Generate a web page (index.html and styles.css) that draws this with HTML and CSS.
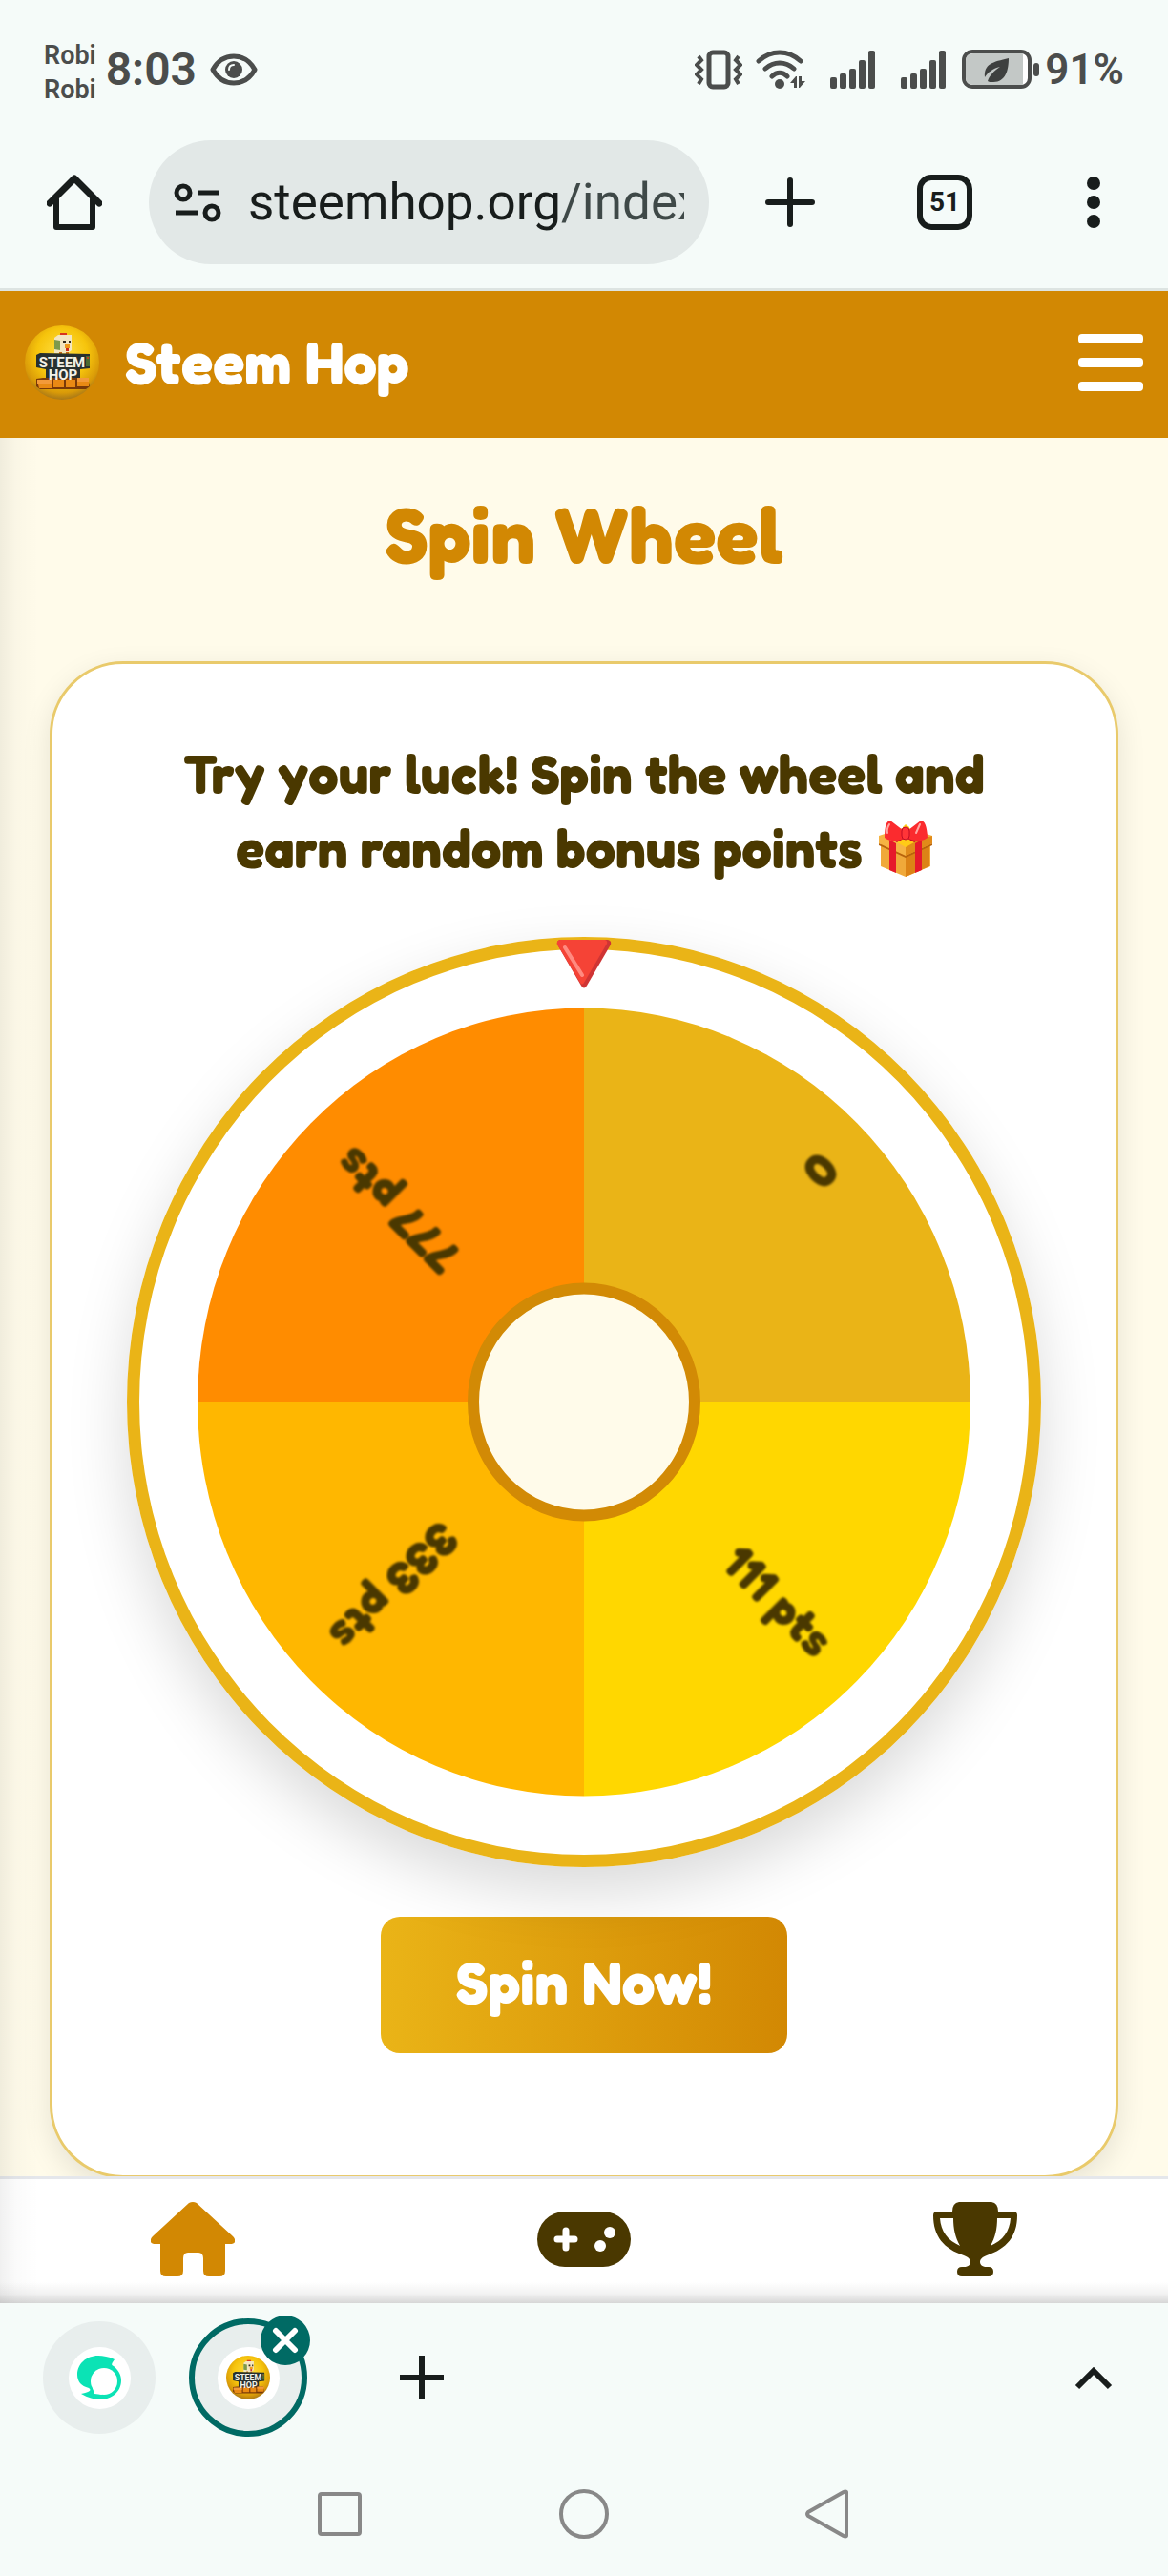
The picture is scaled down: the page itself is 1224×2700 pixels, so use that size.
FILE: index.html
```
<!DOCTYPE html>
<html lang="en">
<head>
    <meta charset="UTF-8">
    <meta name="viewport" content="width=device-width, initial-scale=1">
    <title>Steem Hop</title>
    <link rel="stylesheet" href="styles.css">
</head>
<body>
    <!-- shared logo -->
    <svg class="defs" aria-hidden="true">
        <defs>
            <radialGradient id="egg" cx="50%" cy="38%" r="62%">
                <stop offset="0" stop-color="#ffe045"/>
                <stop offset="0.55" stop-color="#f6c40c"/>
                <stop offset="0.85" stop-color="#d99a08"/>
                <stop offset="1" stop-color="#a87818"/>
            </radialGradient>
            <symbol id="logo" viewBox="0 0 78 78">
                <circle cx="39" cy="39" r="39" fill="url(#egg)"/>
                <path d="M37 12V8h7v4z" fill="#d8341c"/>
                <path d="M31 13l4-3h14v16l-4 3H31z" fill="#f3e6c0"/>
                <path d="M31 15l6 1v10l-6-1z" fill="#7d9a4c"/>
                <path d="M40 16h3v3h-3zM46 16h2v3h-2z" fill="#332a1c"/>
                <path d="M42 20h5v4h-5z" fill="#f09a1c"/>
                <path d="M43 24h3v3h-3z" fill="#cf2a1c"/>
                <path d="M36 28h3v5h-3zM43 28h3v5h-3z" fill="#c86a10"/>
                <path d="M12 31l4-2 52 1v15l-10 1v12l-36 1V46l-10-2z" fill="#27302f"/>
                <path d="M64 32h4v11h-4z" fill="#4a6a30"/>
                <circle cx="66" cy="34" r="1" fill="#e2361c"/>
                <path d="M12 56l7-1h47l2 9-4 3H16l-4-3z" fill="#7a3a08"/>
                <path d="M13 58h15v8H15zM30 57h11v8H30zM43 57h10v8H43zM55 56h12v8H55z" fill="#e98a14"/>
                <path d="M13 57h15v4H13zM55 55h12v4H55z" fill="#f39a3a"/>
                <text class="logo-text" x="39" y="44">STEEM</text>
                <text class="logo-text" x="40" y="57">HOP</text>
            </symbol>
        </defs>
    </svg>

    <div class="status">
        <div class="status-group">
            <div class="carrier"><span>Robi</span><span>Robi</span></div>
            <span class="clock">8:03</span>
            <svg class="eye" width="50" height="34" viewBox="0 0 50 34">
                <path d="M3 17C9 6 17 3 25 3s16 3 22 14C41 28 33 31 25 31S9 28 3 17z" fill="none" stroke="#4b4d4c" stroke-width="5" stroke-linejoin="round"/>
                <circle cx="25" cy="17" r="9" fill="#4b4d4c"/>
                <path d="M20 17c0-3 2-5 5-5" fill="none" stroke="#f5fbf9" stroke-width="2" stroke-linecap="round"/>
            </svg>
        </div>
        <div class="status-group">
            <svg width="50" height="42" viewBox="0 0 50 42">
                <rect x="15" y="3" width="20" height="36" rx="4" fill="none" stroke="#4b4d4c" stroke-width="5"/>
                <path d="M4 7l3 4-5 5 5 5-5 5 5 5-3 5M46 7l-3 4 5 5-5 5 5 5-5 5 3 5" fill="none" stroke="#4b4d4c" stroke-width="4"/>
            </svg>
            <svg class="wifi" width="52" height="42" viewBox="0 0 52 42">
                <g fill="none" stroke="#4b4d4c" stroke-width="5" stroke-linecap="round">
                    <path d="M3 12c13-12 31-12 44 0M10 20c9-8 21-8 30 0M17 28c5-5 11-5 16 0"/>
                </g>
                <circle cx="25" cy="36" r="5" fill="#4b4d4c"/>
                <path d="M36 35l6-7h1v12h-3v-5zM45 28h3v5h4l-6 7h-1z" fill="#4b4d4c"/>
            </svg>
            <svg class="bars" width="48" height="42" viewBox="0 0 48 42" fill="#4b4d4c">
                <rect x="0" y="29" width="7" height="12" rx="2"/><rect x="10" y="25" width="7" height="16" rx="2"/><rect x="20" y="20" width="7" height="21" rx="2"/><rect x="30" y="11" width="7" height="30" rx="2"/><rect x="40" y="1" width="7" height="40" rx="2"/>
            </svg>
            <svg class="bars" width="48" height="42" viewBox="0 0 48 42" fill="#4b4d4c">
                <rect x="0" y="29" width="7" height="12" rx="2"/><rect x="10" y="25" width="7" height="16" rx="2"/><rect x="20" y="20" width="7" height="21" rx="2"/><rect x="30" y="11" width="7" height="30" rx="2"/><rect x="40" y="1" width="7" height="40" rx="2"/>
            </svg>
            <svg class="battery" width="82" height="42" viewBox="0 0 82 42">
                <rect x="2" y="2" width="69" height="37" rx="9" fill="#fff" stroke="#4b4d4c" stroke-width="4"/>
                <path d="M64 4v33H12q-8 0-8-8V12q0-8 8-8z" fill="#c3c8c6"/>
                <rect x="75" y="14" width="6" height="14" rx="3" fill="#4b4d4c"/>
                <path d="M24 29C23 15 32 13 49 9c0 12-3 25-16 25-3 0-5 0-6-1 2-6 6-10 13-15-8 2-13 6-16 11z" fill="#3e403f"/>
            </svg>
            <span class="clock percent">91%</span>
        </div>
    </div>

    <div class="toolbar">
        <button class="tool" aria-label="Home">
            <svg width="58" height="60" viewBox="0 0 58 60" fill="none" stroke="#181d1c" stroke-width="7" stroke-linejoin="round" stroke-linecap="round">
                <path d="M3 31L29 5l26 26"/><path d="M10 27v29h38V27" stroke-width="6"/>
            </svg>
        </button>
        <label class="address">
            <svg width="50" height="42" viewBox="0 0 50 42" fill="none" stroke="#181d1c" stroke-width="5">
                <circle cx="10" cy="11" r="7"/><circle cx="40" cy="32" r="7"/><path d="M25 11h23M2 32h23"/>
            </svg>
            <input class="url" type="text" value="steemhop.org/index.php" aria-label="Address">
        </label>
        <button class="tool add" aria-label="New tab">
            <svg width="52" height="52" viewBox="0 0 52 52" stroke="#181d1c" stroke-width="6" stroke-linecap="round"><path d="M26 3v46M3 26h46"/></svg>
        </button>
        <button class="tool tabs" aria-label="Open tabs">51</button>
        <button class="tool more" aria-label="More">
            <svg width="14" height="54" viewBox="0 0 14 54" fill="#181d1c"><circle cx="7" cy="7" r="7"/><circle cx="7" cy="27" r="7"/><circle cx="7" cy="47" r="7"/></svg>
        </button>
    </div>

    <header class="site-header">
        <a class="brand" href="#">
            <svg width="78" height="78"><use href="#logo"/></svg>
            <span>Steem Hop</span>
        </a>
        <button class="menu" aria-label="Menu"><i></i><i></i><i></i></button>
    </header>

    <div class="page">
        <main class="content">
            <h1>Spin Wheel</h1>
            <section class="card">
                <p class="intro">Try your luck! Spin the wheel and<br>earn random bonus points
                    <svg class="gift" width="56" height="60" viewBox="0 0 56 60" role="img" aria-label="gift">
                        <path d="M2 17L28 8l26 9v31L28 59 2 48z" fill="#f0a93a"/>
                        <path d="M28 26l25-8v30L28 59z" fill="#dc8316"/>
                        <path d="M0 16l28-9 28 9v8L28 37 0 24z" fill="#f6b443"/>
                        <path d="M0 24l28 13 28-13v2L28 39 0 26z" fill="#b8640c"/>
                        <path d="M28 24l28-8v8L28 37z" fill="#e18b19"/>
                        <path d="M11 20l7 4v31l-7-3zM38 24l7-4v32l-7 3z" fill="#e6192b"/>
                        <path d="M11 18l17-7 17 7-8 5-9-4-9 4z" fill="#c10d25"/>
                        <path d="M19 23l9-5 9 5-9 5z" fill="#ffcb17"/>
                        <path d="M25 7l3-3 4 3v5h-7z" fill="#ffcb17"/>
                        <path d="M25 10L12 0Q6 0 6 18q8 6 20 1zM31 10L44 0q6 0 7 18-8 6-20 1z" fill="#fb2b2e"/>
                        <rect x="24" y="7" width="8" height="13" rx="4" fill="#ff3538" stroke="#c10d25"/>
                        <path d="M11 4q-3 5-2 9M43 4l-4 9" stroke="#ffa7a3" stroke-width="2" stroke-linecap="round" fill="none"/>
                    </svg>
                </p>
                <div class="wheel">
                    <svg class="disc" viewBox="0 0 932 948">
                        <path d="M466 474V61A405 413 0 0 1 871 474z" fill="#eab417"/>
                        <path d="M466 474H871A405 413 0 0 1 466 887z" fill="#ffd700"/>
                        <path d="M466 474V887A405 413 0 0 1 61 474z" fill="#ffb700"/>
                        <path d="M466 474H61A405 413 0 0 1 466 61z" fill="#ff8c00"/>
                        <ellipse cx="466" cy="474" rx="116" ry="119" fill="#fffbea" stroke="#d28a05" stroke-width="12"/>
                        <g class="prizes">
                            <text transform="translate(466 474) rotate(-45)" x="361" y="21">0</text>
                            <text transform="translate(466 474) rotate(45)" x="361" y="21">111 pts</text>
                            <text transform="translate(466 474) rotate(135)" x="361" y="21">333 pts</text>
                            <text transform="translate(466 474) rotate(225)" x="361" y="21">777 pts</text>
                        </g>
                    </svg>
                    <svg class="pointer" width="58" height="52" viewBox="0 0 58 52">
                        <path d="M4 1h50q4 1 3 5L32 49q-3 5-6 0L1 6Q0 2 4 1z" fill="#cf3434"/>
                        <path d="M4 1h47q3 1 2 4L29 46q-2 3-4 0L1 6Q0 2 4 1z" fill="#f54336"/>
                        <path d="M9 9l18 29" stroke="#ff8a80" stroke-width="4" stroke-linecap="round"/>
                    </svg>
                </div>
                <button class="spin">Spin Now!</button>
            </section>
        </main>

        <nav class="bottom-nav">
            <a class="active" href="#" aria-label="Home">
                <svg width="88" height="78" viewBox="0 0 88 78" fill="currentColor"><path d="M40 1q4-2 8 0l38 35q3 3 2 6-1 2-5 2h-5v28q0 6-6 6H61q-6 0-6-6V59q0-6-5-6H39q-5 0-5 6v13q0 6-6 6H16q-6 0-6-6V44H5q-4 0-5-2-1-3 2-6z"/></svg>
            </a>
            <a href="#" aria-label="Games">
                <svg width="98" height="78" viewBox="0 0 98 78">
                    <rect y="10" width="98" height="58" rx="29" fill="currentColor"/>
                    <path d="M30 30v18M21 39h18" stroke="#fff" stroke-width="7" stroke-linecap="round"/>
                    <circle cx="76" cy="32" r="6" fill="#fff"/><circle cx="66" cy="46" r="6" fill="#fff"/>
                </svg>
            </a>
            <a href="#" aria-label="Leaderboard">
                <svg width="88" height="78" viewBox="0 0 88 78" fill="currentColor">
                    <path fill-rule="evenodd" d="M27 0h34q7 1 7 10h16q4 0 4 4c0 22-11 35-32 42-5 2-7 4-7 7 0 3 3 5 7 5h2q5 0 5 5t-5 5H30q-5 0-5-5t5-5h2c4 0 7-2 7-5 0-3-2-5-7-7C11 49 0 36 0 14q0-4 4-4h16q0-9 7-10zM7 17c1 14 8 23 21 29-5-9-7-18-7-29zM81 17H67c0 11-2 20-7 29 13-6 20-15 21-29z"/>
                </svg>
            </a>
        </nav>
    </div>

    <div class="tab-strip">
        <button class="tab" aria-label="Steemit">
            <span class="favicon">
                <svg width="46" height="46" viewBox="0 0 46 46">
                    <path d="M22 0C9 0 0 9 0 20c0 7 4 12 12 14 3 2 2 4-8 6 7 4 14 6 20 6 12 0 22-8 22-20 0-6-3-11-8-15-3-1-2-3 1-7-6-3-12-4-17-4z" fill="#0be3b5"/>
                    <circle cx="28" cy="27" r="14" fill="#fff"/>
                    <path d="M16 34l6-1 4 8-8-1z" fill="#fff"/>
                </svg>
            </span>
        </button>
        <button class="tab current" aria-label="Steem Hop">
            <span class="favicon"><svg width="46" height="46"><use href="#logo"/></svg></span>
            <span class="close">
                <svg width="28" height="28" viewBox="0 0 28 28" stroke="#fff" stroke-width="6" stroke-linecap="round"><path d="M4 4l20 20M24 4L4 24"/></svg>
            </span>
        </button>
        <button class="tool new" aria-label="New tab in group">
            <svg width="46" height="46" viewBox="0 0 46 46" stroke="#181d1c" stroke-width="6"><path d="M23 0v46M0 23h46"/></svg>
        </button>
        <button class="tool expand" aria-label="Expand">
            <svg width="40" height="26" viewBox="0 0 40 26" fill="none" stroke="#181d1c" stroke-width="6"><path d="M3 23L20 6l17 17"/></svg>
        </button>
    </div>

    <div class="system-nav">
        <button class="tool" aria-label="Recent apps">
            <svg width="52" height="54" viewBox="0 0 52 54" fill="none" stroke="#888" stroke-width="4"><rect x="5" y="6" width="42" height="42" rx="2"/></svg>
        </button>
        <button class="tool" aria-label="Home screen">
            <svg width="52" height="54" viewBox="0 0 52 54" fill="none" stroke="#888" stroke-width="4"><circle cx="26" cy="27" r="24"/></svg>
        </button>
        <button class="tool" aria-label="Back">
            <svg width="52" height="54" viewBox="0 0 52 54" fill="none" stroke="#888" stroke-width="4" stroke-linejoin="round"><path d="M45 4v46q-1 1-3 0L5 29q-2-2 0-4L42 4q2-1 3 0z"/></svg>
        </button>
    </div>
</body>
</html>
```

FILE: styles.css
```
* {
    box-sizing: border-box;
}
body {
    margin: 0;
    height: 100vh;
    display: flex;
    flex-direction: column;
    background: #f5fbf9;
    color: #4a3800;
    font-family: Fredoka, Lato, sans-serif;
    font-weight: 700;
}
button {
    border: 0;
    padding: 0;
    background: none;
    font: inherit;
    color: inherit;
    cursor: pointer;
}
svg {
    display: block;
    flex: none;
}
.defs {
    position: absolute;
    width: 0;
    height: 0;
}
.logo-text {
    font: 700 15px Roboto, sans-serif;
    fill: #f4f2e8;
    text-anchor: middle;
}

/* phone status bar */
.status {
    display: flex;
    justify-content: space-between;
    height: 146px;
    padding: 38px 46px 0;
    color: #4b4d4c;
    font-family: Roboto, sans-serif;
    font-weight: 600;
}
.status-group {
    display: flex;
    align-items: center;
    height: 70px;
}
.carrier {
    display: flex;
    flex-direction: column;
    padding-top: 5px;
    font-size: 27px;
    line-height: 36px;
}
.clock {
    margin-left: 10px;
    font-size: 48px;
    line-height: 70px;
}
.eye {
    margin-left: 14px;
}
.wifi {
    margin-left: 14px;
}
.bars {
    margin-left: 26px;
}
.battery {
    margin-left: 16px;
}
.percent {
    margin-left: 5px;
    font-size: 44px;
}

/* browser toolbar */
.toolbar {
    display: flex;
    align-items: center;
    height: 159px;
    padding: 0 71px 24px 49px;
    border-bottom: 3px solid #dde4e2;
}
.tool {
    display: flex;
    align-items: center;
    justify-content: center;
}
.address {
    flex: 1;
    min-width: 0;
    display: flex;
    align-items: center;
    gap: 28px;
    height: 130px;
    margin-left: 49px;
    padding: 0 26px;
    border-radius: 65px;
    background: #e2e8e7;
}
.url {
    flex: 1;
    min-width: 0;
    border: 0;
    padding: 0;
    outline: none;
    font: 400 53px/70px Roboto, sans-serif;
    color: transparent;
    background: linear-gradient(to right, #181d1c 328px, #3f4948 328px);
    -webkit-background-clip: text;
    background-clip: text;
}
.add {
    margin-left: 59px;
}
.tabs {
    width: 58px;
    height: 58px;
    margin-left: 107px;
    border: 6px solid #181d1c;
    border-radius: 15px;
    color: #181d1c;
    font: 700 28px/46px Roboto, sans-serif;
}
.more {
    margin-left: 120px;
}

/* site */
.site-header {
    display: flex;
    align-items: center;
    justify-content: space-between;
    height: 154px;
    padding: 0 26px 4px;
    background: #d28803;
    color: #fff;
}
.brand {
    display: flex;
    align-items: center;
    gap: 27px;
    font-size: 62px;
    line-height: 72px;
    color: inherit;
    text-decoration: none;
}
.menu {
    display: flex;
    flex-direction: column;
    gap: 15px;
    width: 68px;
}
.menu i {
    height: 10px;
    border-radius: 4px;
    background: #fff;
}
.page {
    position: relative;
    flex: 1;
    min-height: 0;
    display: flex;
    flex-direction: column;
    background: #fffbea;
}
.page::before,
.page::after {
    content: "";
    position: absolute;
    left: 0;
    bottom: 0;
    z-index: 1;
    pointer-events: none;
}
.page::before {
    top: 0;
    width: 40px;
    background: linear-gradient(to right, rgba(0, 0, 0, .06), rgba(0, 0, 0, .02) 40%, transparent);
}
.page::after {
    right: 0;
    height: 22px;
    background: linear-gradient(to top, rgba(0, 0, 0, .16), rgba(0, 0, 0, .05) 45%, transparent);
}
.content {
    flex: 1;
    min-height: 0;
    overflow: hidden;
    padding: 53px 52px 0;
}
h1 {
    margin: 0 0 85px;
    font-size: 83px;
    line-height: 96px;
    text-align: center;
    color: #d28803;
}
.card {
    display: flex;
    flex-direction: column;
    align-items: center;
    padding: 75px 16px 128px;
    border: 3px solid #e9ca6b;
    border-radius: 77px;
    background: #fff;
    box-shadow: 0 10px 30px rgba(0, 0, 0, .1);
}
.intro {
    margin: 0 0 55px;
    font-size: 56px;
    line-height: 78px;
    text-align: center;
}
.gift {
    display: inline-block;
    margin-left: 4px;
    vertical-align: -11px;
}
.wheel {
    position: relative;
    width: 100%;
    max-width: 958px;
    aspect-ratio: 958 / 975;
    border: 13px solid #eab417;
    border-radius: 50%;
    box-shadow: 0 26px 64px rgba(0, 0, 0, .15);
}
.disc {
    width: 100%;
    height: 100%;
}
.prizes {
    font-size: 50px;
    fill: #4a3800;
    text-anchor: end;
    filter: blur(1px);
}
.pointer {
    position: absolute;
    top: -11px;
    left: 50%;
    margin-left: -29px;
}
.spin {
    height: 143px;
    margin-top: 52px;
    padding: 0 79px 5px;
    border-radius: 20px;
    background: linear-gradient(to right, #eab417, #d28803);
    color: #fff;
    font-size: 62px;
    line-height: 72px;
}
.bottom-nav {
    display: flex;
    justify-content: space-around;
    align-items: center;
    height: 133px;
    padding-bottom: 4px;
    border-top: 3px solid #e5e7eb;
    background: #fff;
}
.bottom-nav a {
    color: #4a3800;
}
.bottom-nav .active {
    color: #d28803;
}

/* browser tab strip */
.tab-strip {
    display: flex;
    align-items: center;
    height: 156px;
    padding: 0 58px 0 45px;
}
.tab {
    position: relative;
    display: flex;
    align-items: center;
    justify-content: center;
    width: 118px;
    height: 118px;
    border-radius: 50%;
    background: #e8eeed;
}
.current {
    width: 124px;
    height: 124px;
    margin-left: 35px;
    border: 6px solid #006a64;
}
.favicon {
    display: flex;
    align-items: center;
    justify-content: center;
    width: 65px;
    height: 65px;
    border-radius: 50%;
    background: #fff;
}
.close {
    position: absolute;
    top: -9px;
    right: -9px;
    display: flex;
    align-items: center;
    justify-content: center;
    width: 52px;
    height: 52px;
    border-radius: 50%;
    background: #006a64;
}
.new {
    margin-left: 97px;
}
.expand {
    margin-left: auto;
}

/* system navigation */
.system-nav {
    display: flex;
    justify-content: center;
    gap: 204px;
    height: 130px;
    padding: 38px 0;
}
```
